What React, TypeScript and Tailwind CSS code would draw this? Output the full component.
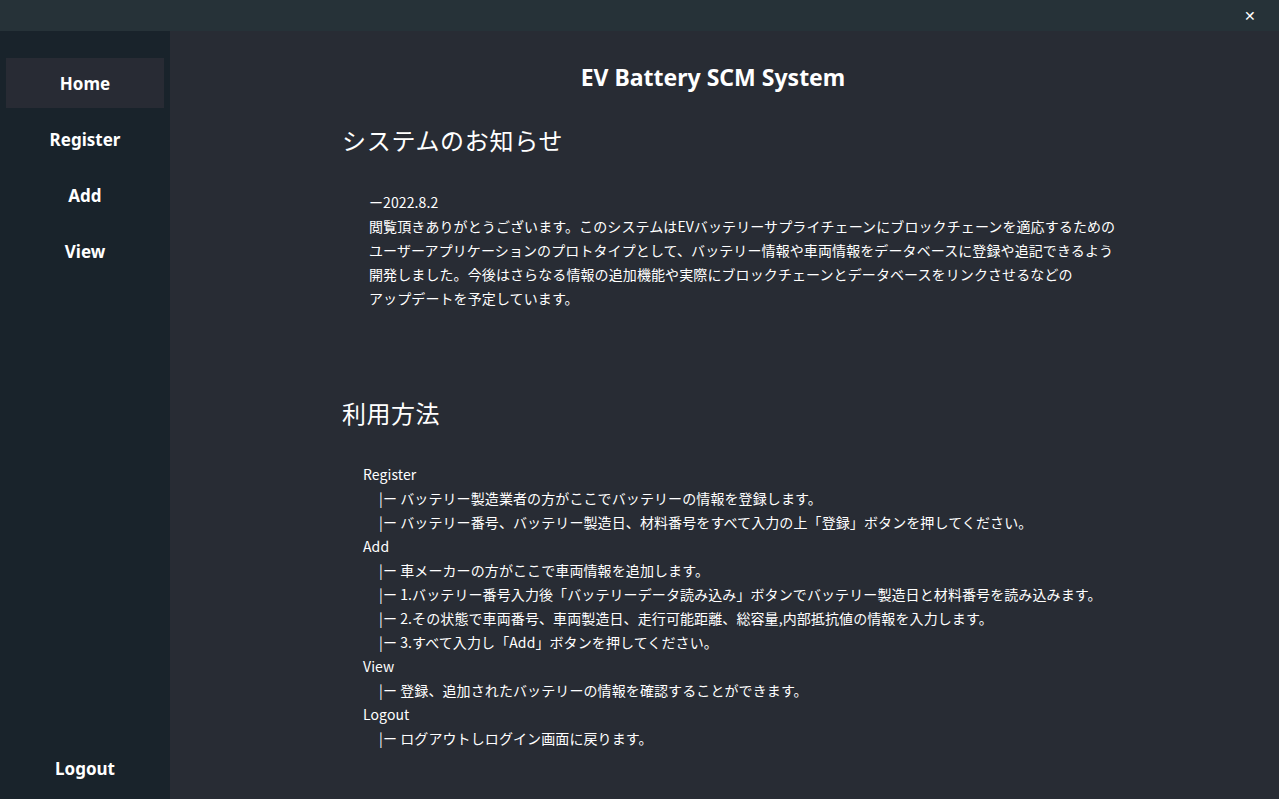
import React from "react";

const jp = { fontFamily: '"Noto Sans CJK JP", "Noto Sans", sans-serif' };
const ui = { fontFamily: '"Noto Sans", "Noto Sans CJK JP", sans-serif' };

const notice = [
  "ー2022.8.2",
  "閲覧頂きありがとうございます。このシステムはEVバッテリーサプライチェーンにブロックチェーンを適応するための",
  "ユーザーアプリケーションのプロトタイプとして、バッテリー情報や車両情報をデータベースに登録や追記できるよう",
  "開発しました。今後はさらなる情報の追加機能や実際にブロックチェーンとデータベースをリンクさせるなどの",
  "アップデートを予定しています。",
];

const usage: { t: string; sub?: boolean }[] = [
  { t: "Register" },
  { t: "|ー バッテリー製造業者の方がここでバッテリーの情報を登録します。", sub: true },
  { t: "|ー バッテリー番号、バッテリー製造日、材料番号をすべて入力の上「登録」ボタンを押してください。", sub: true },
  { t: "Add" },
  { t: "|ー 車メーカーの方がここで車両情報を追加します。", sub: true },
  { t: "|ー 1.バッテリー番号入力後「バッテリーデータ読み込み」ボタンでバッテリー製造日と材料番号を読み込みます。", sub: true },
  { t: "|ー 2.その状態で車両番号、車両製造日、走行可能距離、総容量,内部抵抗値の情報を入力します。", sub: true },
  { t: "|ー 3.すべて入力し「Add」ボタンを押してください。", sub: true },
  { t: "View" },
  { t: "|ー 登録、追加されたバッテリーの情報を確認することができます。", sub: true },
  { t: "Logout" },
  { t: "|ー ログアウトしログイン画面に戻ります。", sub: true },
];

function NavItem({ label, active }: { label: string; active?: boolean }) {
  return (
    <div
      className={`h-[50px] mb-[6px] flex items-center justify-center text-white font-bold text-[17px] pt-[1px] ${
        active ? "bg-[#282b34]" : ""
      }`}
      style={ui}
    >
      {label}
    </div>
  );
}

export default function App() {
  return (
    <div className="w-[1279px] h-[799px] flex flex-col overflow-hidden bg-[#282c34]">
      <div className="h-[31px] bg-[#263238] flex items-center justify-end pr-[23px]">
        <span className="text-white text-[14px] leading-none" style={ui}>
          ✕
        </span>
      </div>
      <div className="flex-1 flex min-h-0">
        <div className="w-[170px] bg-[#19232b] flex flex-col px-[6px] pt-[27px] pb-[5px]">
          <NavItem label="Home" active />
          <NavItem label="Register" />
          <NavItem label="Add" />
          <NavItem label="View" />
          <div className="flex-1" />
          <div
            className="h-[50px] flex items-center justify-center text-white font-bold text-[17px]"
            style={ui}
          >
            Logout
          </div>
        </div>
        <div className="flex-1 bg-[#282c34] text-white pt-[31px]">
          <div className="text-center pr-[23px] text-[23px] leading-[30px] font-bold" style={ui}>
            EV Battery SCM System
          </div>
          <div className="pl-[172px]" style={jp}>
            <div className="mt-[32px] text-[24px] leading-[32px] tracking-[0.7px]">システムのお知らせ</div>
            <div className="mt-[34px] pl-[27px] text-[14px] leading-[24px] tracking-[0.1px]">
              {notice.map((l, i) => (
                <div key={i} className="whitespace-nowrap">
                  {l}
                </div>
              ))}
            </div>
            <div className="mt-[87px] text-[24px] leading-[32px] tracking-[0.5px]">利用方法</div>
            <div className="mt-[33px] pl-[21px] text-[14px] leading-[24px] tracking-[0.1px]">
              {usage.map((l, i) => (
                <div key={i} className={`whitespace-nowrap ${l.sub ? "pl-[16px]" : ""}`}>
                  {l.t}
                </div>
              ))}
            </div>
          </div>
        </div>
      </div>
    </div>
  );
}
